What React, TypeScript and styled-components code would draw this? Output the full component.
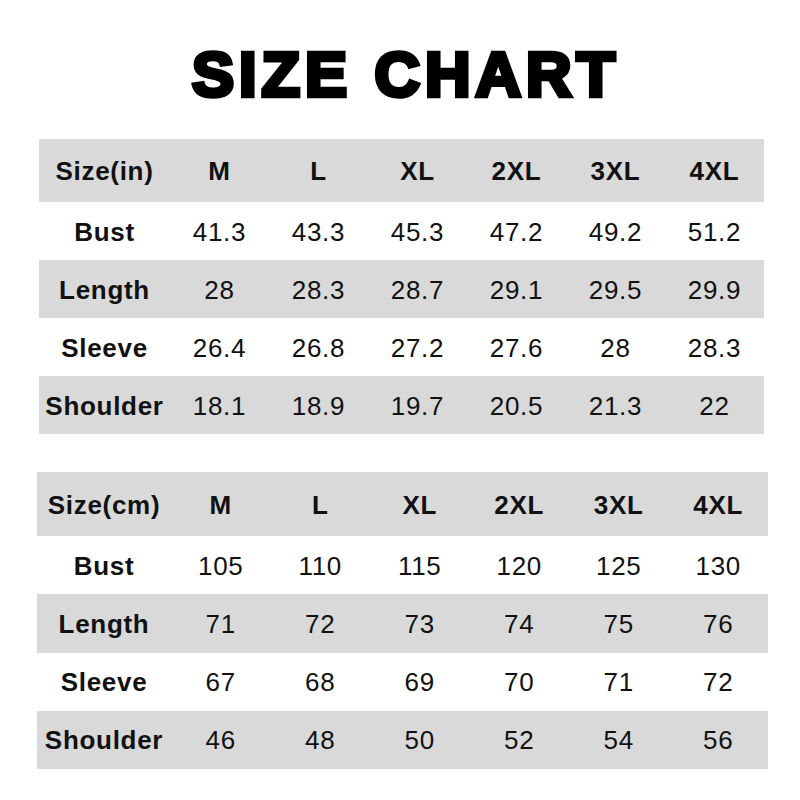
import React from "react";
import styled, { createGlobalStyle } from "styled-components";

const GlobalStyle = createGlobalStyle`
  html, body {
    margin: 0;
    padding: 0;
    background: #ffffff;
  }
  body {
    font-family: "Liberation Sans", Arial, sans-serif;
    color: #111111;
  }
`;

const Page = styled.div`
  width: 800px;
  height: 800px;
  background: #ffffff;
  display: flex;
  flex-direction: column;
  overflow: hidden;
`;

const Title = styled.h1`
  margin: 43px 0 0 12px;
  height: 63px;
  line-height: 63px;
  font-family: "Liberation Sans", Arial, sans-serif;
  font-size: 63px;
  font-weight: 700;
  letter-spacing: 5px;
  text-align: center;
  color: #000000;
  -webkit-text-stroke: 4.5px #000000;
  paint-order: stroke fill;
`;

const Table = styled.div<{ $left: number; $width: number; $top: number }>`
  margin-top: ${(p) => p.$top}px;
  margin-left: ${(p) => p.$left}px;
  width: ${(p) => p.$width}px;
  display: flex;
  flex-direction: column;
`;

const Row = styled.div<{ $shade: boolean; $height: number; $first: number }>`
  display: grid;
  grid-template-columns: ${(p) => p.$first}px repeat(6, 1fr);
  height: ${(p) => p.$height}px;
  background: ${(p) => (p.$shade ? "#d9d9d9" : "#ffffff")};
`;

const Cell = styled.div<{ $bold?: boolean }>`
  display: flex;
  align-items: center;
  justify-content: center;
  padding-top: 2px;
  font-size: 26px;
  letter-spacing: 0.7px;
  font-weight: ${(p) => (p.$bold ? 700 : 400)};
  color: #111111;
  white-space: nowrap;
`;

type ChartData = {
  unit: string;
  rows: { label: string; values: string[] }[];
};

const sizes = ["M", "L", "XL", "2XL", "3XL", "4XL"];

const inches: ChartData = {
  unit: "Size(in)",
  rows: [
    { label: "Bust", values: ["41.3", "43.3", "45.3", "47.2", "49.2", "51.2"] },
    { label: "Length", values: ["28", "28.3", "28.7", "29.1", "29.5", "29.9"] },
    { label: "Sleeve", values: ["26.4", "26.8", "27.2", "27.6", "28", "28.3"] },
    { label: "Shoulder", values: ["18.1", "18.9", "19.7", "20.5", "21.3", "22"] },
  ],
};

const cms: ChartData = {
  unit: "Size(cm)",
  rows: [
    { label: "Bust", values: ["105", "110", "115", "120", "125", "130"] },
    { label: "Length", values: ["71", "72", "73", "74", "75", "76"] },
    { label: "Sleeve", values: ["67", "68", "69", "70", "71", "72"] },
    { label: "Shoulder", values: ["46", "48", "50", "52", "54", "56"] },
  ],
};

function SizeTable({
  data,
  left,
  width,
  top,
  first,
  headerHeight,
  rowHeight,
}: {
  data: ChartData;
  left: number;
  width: number;
  top: number;
  first: number;
  headerHeight: number;
  rowHeight: number;
}) {
  return (
    <Table $left={left} $width={width} $top={top}>
      <Row $shade $height={headerHeight} $first={first}>
        <Cell $bold>{data.unit}</Cell>
        {sizes.map((s) => (
          <Cell $bold key={s}>
            {s}
          </Cell>
        ))}
      </Row>
      {data.rows.map((r, i) => (
        <Row key={r.label} $shade={i % 2 === 1} $height={rowHeight} $first={first}>
          <Cell $bold>{r.label}</Cell>
          {r.values.map((v, j) => (
            <Cell key={j}>{v}</Cell>
          ))}
        </Row>
      ))}
    </Table>
  );
}

export default function App() {
  return (
    <>
      <GlobalStyle />
      <Page>
        <Title>SIZE CHART</Title>
        <SizeTable
          data={inches}
          left={39}
          width={725}
          top={33}
          first={131}
          headerHeight={63}
          rowHeight={58}
        />
        <SizeTable
          data={cms}
          left={37}
          width={731}
          top={38}
          first={134}
          headerHeight={64}
          rowHeight={58.25}
        />
      </Page>
    </>
  );
}
